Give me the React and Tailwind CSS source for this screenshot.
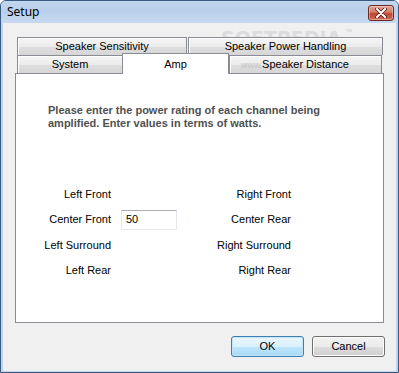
export default function App() {
  const tab =
    "h-full flex items-center justify-center border border-[#898c95] border-b-0 bg-[linear-gradient(to_bottom,#f5f5f5,#ececec_50%,#dedede_51%,#d6d6d6)] shadow-[inset_1px_1px_0_#ffffff] text-[11px] leading-none";
  const rows = [
    ["Left Front", "", "Right Front"],
    ["Center Front", "50", "Center Rear"],
    ["Left Surround", "", "Right Surround"],
    ["Left Rear", "", "Right Rear"],
  ];
  return (
    <div className="relative w-[399px] h-[373px] overflow-hidden bg-white font-['Liberation_Sans',Arial,sans-serif] text-black">
      <div className="w-full h-full flex flex-col border border-[#3b5a82] rounded-t-[6px] bg-[#bed3ec]">
        {/* title bar */}
        <div className="h-[22px] flex items-center justify-between pl-[6px] pr-[4px] rounded-t-[5px] bg-[linear-gradient(to_bottom,#c3d6ee,#b9cfe9_45%,#bcd2eb_55%,#c6d9ef)]">
          <span className="font-['Noto_Sans','DejaVu_Sans',sans-serif] text-[12px] leading-none text-black">Setup</span>
          <div className="w-[26px] h-[16px] mt-[2px] rounded-[3px] border border-[#6e2a20] bg-[linear-gradient(to_bottom,#e2a597,#d27a67_45%,#c2432e_55%,#d0705b)] shadow-[inset_0_0_0_1px_rgba(255,255,255,0.35)] flex items-center justify-center">
            <svg width="12" height="10" viewBox="0 0 12 10">
              <path d="M2 1 L10 9 M10 1 L2 9" stroke="#5a1d15" strokeWidth="3.6" strokeLinecap="round" />
              <path d="M2 1 L10 9 M10 1 L2 9" stroke="#ffffff" strokeWidth="2" strokeLinecap="round" />
            </svg>
          </div>
        </div>
        {/* client area */}
        <div className="relative flex-1 mx-[2px] mb-[1px] bg-[#f0f0f0] pl-[12px] pt-[14px] flex flex-col">
          {/* watermark, clipped above the tabs */}
          <div className="absolute left-[218px] top-[5px] h-[9px] w-[120px] overflow-hidden pointer-events-none">
            <div className="font-['DejaVu_Sans',sans-serif] font-bold text-[19px] leading-[9px] text-[#dcdcdc] pt-[6px]">
              SOFTPEDIA
            </div>
          </div>
          <div className="absolute left-[342px] top-[5px] text-[7px] leading-none text-[#d0d0d0] pointer-events-none">™</div>
          <div className="w-[369px] flex flex-col">
            <div className="h-[18px] flex pl-[2px] gap-[1px]">
              <div className={tab + " w-[170px]"}>Speaker Sensitivity</div>
              <div className={tab + " w-[195px]"}>Speaker Power Handling</div>
            </div>
            <div className="h-[18px] flex items-end pl-[2px]">
              <div className={tab + " w-[106px] h-[18px]"}>System</div>
              <div className="relative z-10 w-[107px] h-[21px] -mb-[1px] -ml-[1px] border border-[#898c95] border-b-0 bg-white flex items-start justify-center pt-[5px] text-[11px] leading-none">
                Amp
              </div>
              <div className={tab + " relative w-[153px] h-[18px]"}>
                <span className="absolute left-[11px] top-[5px] text-[9px] leading-none text-[#c4c4c4]">www.</span>
                <span className="relative">Speaker Distance</span>
              </div>
            </div>
            <div className="w-[369px] h-[250px] border border-[#898c95] bg-white pl-[32px] pt-[30px] flex flex-col">
              <p className="font-bold text-[11px] leading-[13px] text-[#505050]">
                Please enter the power rating of each channel being
                <br />
                amplified. Enter values in terms of watts.
              </p>
              <div className="mt-[54px] -ml-[32px] flex flex-col gap-[5.5px] text-[11px] text-black">
                {rows.map(([l, v, r]) => (
                  <div key={l} className="h-[20px] flex items-center">
                    <div className="w-[95px] text-right leading-none">{l}</div>
                    <div className="w-[56px] ml-[10px] h-[20px]">
                      {v && (
                        <div className="w-[56px] h-[20px] border border-[#e3e9ef] border-t-[#abadb3] bg-white flex items-center pl-[4px] leading-none">
                          {v}
                        </div>
                      )}
                    </div>
                    <div className="w-[114px] text-right leading-none">{r}</div>
                  </div>
                ))}
              </div>
            </div>
          </div>
          <div className="w-[370px] mt-[13px] flex justify-end gap-[8px]">
            <button className="w-[73px] h-[21px] rounded-[3px] border border-[#3c7fb1] bg-[linear-gradient(to_bottom,#eaf6fd,#d9f0fc_50%,#bee6fd_51%,#a7d9f5)] shadow-[inset_0_0_0_1px_#c4e5f6] text-[11px] leading-none">
              OK
            </button>
            <button className="w-[73px] h-[21px] rounded-[3px] border border-[#707070] bg-[linear-gradient(to_bottom,#f2f2f2,#ebebeb_50%,#dddddd_51%,#cfcfcf)] shadow-[inset_0_0_0_1px_#fcfcfc] text-[11px] leading-none">
              Cancel
            </button>
          </div>
        </div>
      </div>
    </div>
  );
}
